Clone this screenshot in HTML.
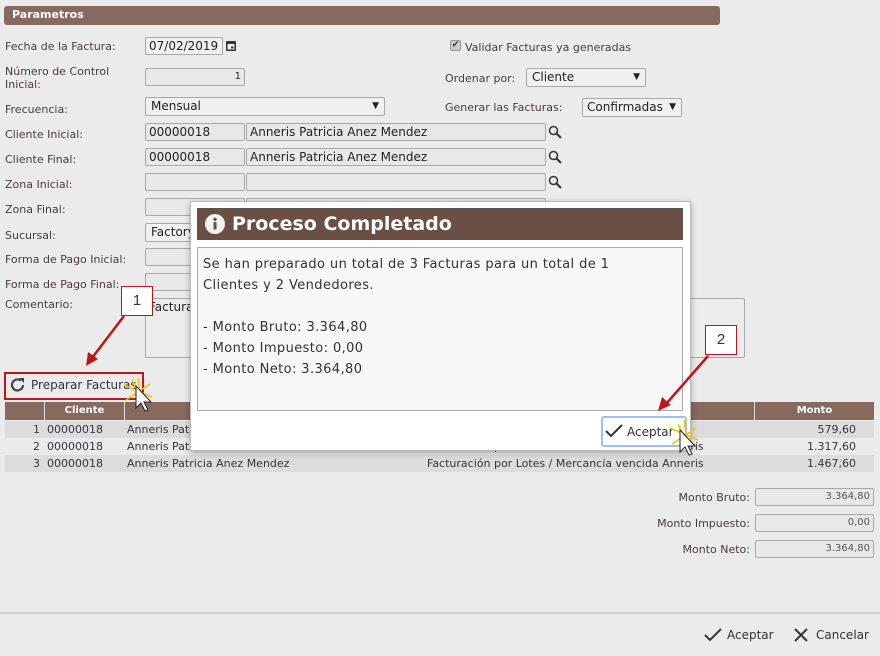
<!DOCTYPE html>
<html><head><meta charset="utf-8"><style>
*{box-sizing:border-box}
body{margin:0;width:880px;height:656px;background:#ebebeb;font-family:"DejaVu Sans","Liberation Sans",sans-serif;font-size:11px;color:#3a3040;position:relative;overflow:hidden}
.a{position:absolute}
.hdr{left:4px;top:6px;width:716px;height:19px;background:#856a5d;border-radius:3px;color:#fff;font-weight:bold;padding:2px 8px;font-size:11px}
.lbl{position:absolute;left:5px;color:#4a3a40}
.inp{position:absolute;background:#e8e8e8;border:1px solid #a8a8a8;border-radius:2px;height:18px;font-size:12px;padding:0 3px;line-height:16px;color:#222}
.sel{position:absolute;background:#f0f0f0;border:1px solid #a8a8a8;border-radius:2px;height:19px;font-size:12px;padding:0 5px;line-height:17px;color:#222}
.sel:after{content:"▼";position:absolute;right:5px;font-size:9px}
.mag{position:absolute;width:14px;height:14px}
.row{position:absolute;left:5px;width:869px;height:17px;font-size:11px;line-height:17px}
</style></head><body>
<div class="a hdr">Parametros</div>

<div class="lbl" style="top:40px">Fecha de la Factura:</div>
<div class="inp" style="left:145px;top:37px;width:78px;background:#f0f0f0">07/02/2019</div>
<svg class="a" style="left:225px;top:39px" width="12" height="13" viewBox="0 0 12 13"><rect x="1" y="2" width="10" height="10" rx="1" fill="#333"/><rect x="2.5" y="5" width="7" height="5.5" fill="#eee"/><rect x="6" y="7.5" width="2.5" height="2" fill="#333"/></svg>
<div class="lbl" style="top:65px;line-height:13px">Número de Control<br>Inicial:</div>
<div class="inp" style="left:145px;top:68px;width:100px;text-align:right;font-size:10px">1</div>
<div class="lbl" style="top:103px">Frecuencia:</div>
<div class="sel" style="left:145px;top:97px;width:240px">Mensual</div>
<div class="lbl" style="top:128px">Cliente Inicial:</div>
<div class="inp" style="left:145px;top:123px;width:100px">00000018</div>
<div class="inp" style="left:246px;top:123px;width:300px">Anneris Patricia Anez Mendez</div>
<div class="lbl" style="top:153px">Cliente Final:</div>
<div class="inp" style="left:145px;top:148px;width:100px">00000018</div>
<div class="inp" style="left:246px;top:148px;width:300px">Anneris Patricia Anez Mendez</div>
<div class="lbl" style="top:178px">Zona Inicial:</div>
<div class="inp" style="left:145px;top:173px;width:100px"></div>
<div class="inp" style="left:246px;top:173px;width:300px"></div>
<div class="lbl" style="top:203px">Zona Final:</div>
<div class="inp" style="left:145px;top:198px;width:100px"></div>
<div class="inp" style="left:246px;top:198px;width:300px"></div>
<div class="lbl" style="top:229px">Sucursal:</div>
<div class="sel" style="left:145px;top:223px;width:240px">Factory</div>
<div class="lbl" style="top:253px">Forma de Pago Inicial:</div>
<div class="inp" style="left:145px;top:248px;width:100px"></div>
<div class="lbl" style="top:278px">Forma de Pago Final:</div>
<div class="inp" style="left:145px;top:273px;width:100px"></div>
<div class="lbl" style="top:298px">Comentario:</div>
<div class="inp" style="left:145px;top:298px;width:600px;height:60px;background:#ececec">Facturación</div>

<svg class="mag" style="left:548px;top:125px" viewBox="0 0 14 14"><circle cx="5.5" cy="5.5" r="4" stroke="#333" stroke-width="1.5" fill="none"/><path d="M8.5 8.5L13 13" stroke="#333" stroke-width="2"/></svg>
<svg class="mag" style="left:548px;top:150px" viewBox="0 0 14 14"><circle cx="5.5" cy="5.5" r="4" stroke="#333" stroke-width="1.5" fill="none"/><path d="M8.5 8.5L13 13" stroke="#333" stroke-width="2"/></svg>
<svg class="mag" style="left:548px;top:175px" viewBox="0 0 14 14"><circle cx="5.5" cy="5.5" r="4" stroke="#333" stroke-width="1.5" fill="none"/><path d="M8.5 8.5L13 13" stroke="#333" stroke-width="2"/></svg>

<div class="a" style="left:450px;top:40px;width:11px;height:11px;background:#ccc;border:1px solid #999;border-radius:2px;font-size:9px;line-height:9px;text-align:center">✔</div>
<div class="a" style="left:465px;top:41px;color:#4a3a40">Validar Facturas ya generadas</div>
<div class="a" style="left:445px;top:72px;color:#4a3a40">Ordenar por:</div>
<div class="sel" style="left:526px;top:68px;width:120px">Cliente</div>
<div class="a" style="left:445px;top:101px;color:#4a3a40">Generar las Facturas:</div>
<div class="sel" style="left:582px;top:98px;width:100px;padding-left:4px">Confirmadas</div>

<div class="a" style="left:4px;top:372px;width:140px;height:28px;border:2px solid #c0141c"></div>
<svg class="a" style="left:9px;top:376px" width="18" height="18" viewBox="0 0 18 18"><path d="M14 9a5.5 5.5 0 1 1-2-4.3" stroke="#444" stroke-width="2.2" fill="none"/><path d="M10 2h5v5z" fill="#444"/></svg>
<div class="a" style="left:31px;top:378px;font-size:12px;color:#333">Preparar Facturas</div>

<div class="a" style="left:5px;top:402px;width:869px;height:18px;background:#856a5d"></div>
<div class="a" style="left:44px;top:402px;width:1px;height:18px;background:#ddd"></div>
<div class="a" style="left:124px;top:402px;width:1px;height:18px;background:#ddd"></div>
<div class="a" style="left:754px;top:402px;width:1px;height:18px;background:#ddd"></div>
<div class="a" style="left:45px;top:405px;width:79px;text-align:center;color:#fff;font-weight:bold;font-size:10px">Cliente</div>
<div class="a" style="left:755px;top:405px;width:119px;text-align:center;color:#fff;font-weight:bold;font-size:10px">Monto</div>
<div class="row" style="top:421px;background:#dcdcdc"><span class="a" style="left:28px">1</span><span class="a" style="left:42px">00000018</span><span class="a" style="left:122px">Anneris Patricia Anez Mendez</span><span class="a" style="right:18px">579,60</span></div>
<div class="row" style="top:438px;background:#ebebeb"><span class="a" style="left:28px">2</span><span class="a" style="left:42px">00000018</span><span class="a" style="left:122px">Anneris Patricia Anez Mendez</span><span class="a" style="left:422px">Facturación por Lotes / Mercancía vencida Anneris</span><span class="a" style="right:18px">1.317,60</span></div>
<div class="row" style="top:455px;background:#dcdcdc"><span class="a" style="left:28px">3</span><span class="a" style="left:42px">00000018</span><span class="a" style="left:122px">Anneris Patricia Anez Mendez</span><span class="a" style="left:422px">Facturación por Lotes / Mercancía vencida Anneris</span><span class="a" style="right:18px">1.467,60</span></div>

<div class="a" style="right:130px;top:491px;color:#4a3a40">Monto Bruto:</div>
<div class="inp" style="left:755px;top:488px;width:119px;text-align:right;font-size:10px;color:#555">3.364,80</div>
<div class="a" style="right:130px;top:517px;color:#4a3a40">Monto Impuesto:</div>
<div class="inp" style="left:755px;top:514px;width:119px;text-align:right;font-size:10px;color:#555">0,00</div>
<div class="a" style="right:130px;top:543px;color:#4a3a40">Monto Neto:</div>
<div class="inp" style="left:755px;top:540px;width:119px;text-align:right;font-size:10px;color:#555">3.364,80</div>

<div class="a" style="left:0;top:612px;width:880px;height:2px;background:#d0d0d0"></div>
<svg class="a" style="left:704px;top:628px" width="18" height="14" viewBox="0 0 18 14"><path d="M1 7l5 5L17 1" stroke="#333" stroke-width="2" fill="none"/></svg>
<div class="a" style="left:727px;top:628px;font-size:12px;color:#333">Aceptar</div>
<svg class="a" style="left:794px;top:628px" width="14" height="14" viewBox="0 0 14 14"><path d="M1 1L13 13M13 1L1 13" stroke="#333" stroke-width="2"/></svg>
<div class="a" style="left:816px;top:628px;font-size:12px;color:#333">Cancelar</div>

<!-- modal -->
<div class="a" style="left:190px;top:201px;width:501px;height:250px;background:#fff;border:1px solid #bbb;box-shadow:0 2px 6px rgba(0,0,0,.3)"></div>
<div class="a" style="left:197px;top:208px;width:486px;height:32px;background:#6b4f44;border:1px solid #555"></div>
<svg class="a" style="left:205px;top:214px" width="20" height="20" viewBox="0 0 20 20"><circle cx="10" cy="10" r="10" fill="#f2f2f2"/><rect x="8.5" y="8" width="3" height="7.5" fill="#6b4f44"/><circle cx="10" cy="5.3" r="1.7" fill="#6b4f44"/></svg>
<div class="a" style="left:232px;top:213px;color:#fff;font-weight:bold;font-size:19px">Proceso Completado</div>
<div class="a" style="left:197px;top:247px;width:486px;height:164px;background:#f7f7f7;border:1px solid #aaa;padding:6px 5px;font-size:13px;line-height:21px;color:#333;letter-spacing:.4px">Se han preparado un total de 3 Facturas para un total de 1<br>Clientes y 2 Vendedores.<br><br>- Monto Bruto: 3.364,80<br>- Monto Impuesto: 0,00<br>- Monto Neto: 3.364,80</div>
<div class="a" style="left:601px;top:416px;width:86px;height:31px;border:2px solid #9ec0ee;border-radius:3px;background:#fff"></div>
<svg class="a" style="left:605px;top:424px" width="18" height="14" viewBox="0 0 18 14"><path d="M1 7l5 5L17 1" stroke="#333" stroke-width="2" fill="none"/></svg>
<div class="a" style="left:627px;top:425px;font-size:12px;color:#333">Aceptar</div>

<!-- annotations -->
<svg class="a" style="left:0;top:0" width="880" height="656">
<path d="M124 316L92 358" stroke="#c0141c" stroke-width="2.5"/><path d="M86 366l2-14 10 7z" fill="#c0141c"/>
<path d="M708 356L666 404" stroke="#c0141c" stroke-width="2.5"/><path d="M658 411l4-14 9 8z" fill="#c0141c"/>
<g stroke="#f2c200" stroke-width="1.5"><path d="M124 385l28 12M138 378l4 28M126 400l24-16M132 380l12 24"/><path d="M670 428l28 12M684 420l4 28M672 444l24-16M678 424l12 24"/></g>
<path d="M136 386v22l5-5 4 8 3-1-4-8h7z" fill="#fff" stroke="#222"/>
<path d="M680 430v22l5-5 4 8 3-1-4-8h7z" fill="#fff" stroke="#222"/>
</svg>
<div class="a" style="left:121px;top:286px;width:32px;height:30px;background:#fff;border:1px solid #c0141c;font-size:15px;text-align:center;line-height:28px;font-family:'Liberation Sans',sans-serif">1</div>
<div class="a" style="left:705px;top:325px;width:32px;height:30px;background:#fff;border:1px solid #c0141c;font-size:15px;text-align:center;line-height:28px;font-family:'Liberation Sans',sans-serif">2</div>
</body></html>
